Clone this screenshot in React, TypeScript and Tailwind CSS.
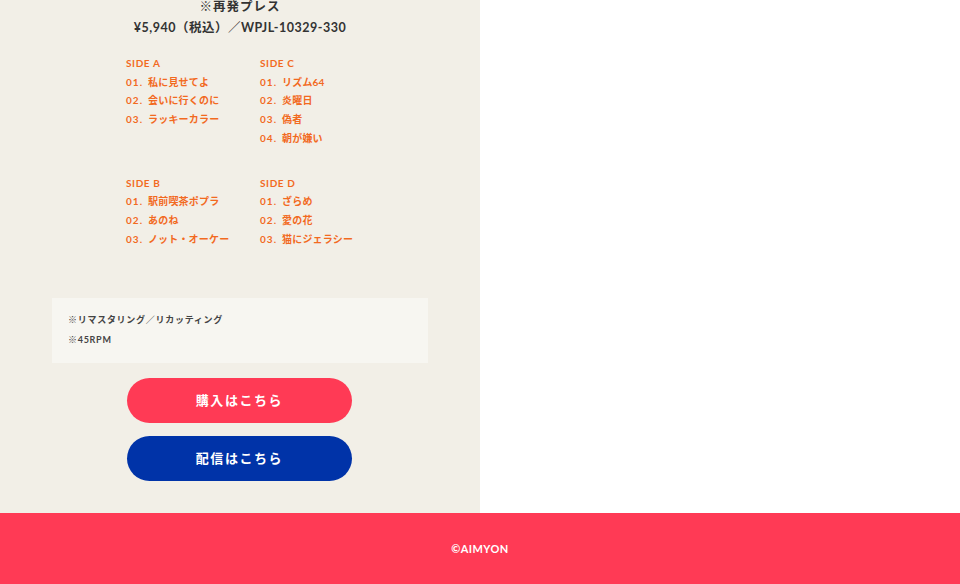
const sides = [
  [
    { label: 'SIDE A', tracks: ['私に見せてよ', '会いに行くのに', 'ラッキーカラー'] },
    { label: 'SIDE C', tracks: ['リズム64', '炎曜日', '偽者', '朝が嫌い'] },
  ],
  [
    { label: 'SIDE B', tracks: ['駅前喫茶ポプラ', 'あのね', 'ノット・オーケー'] },
    { label: 'SIDE D', tracks: ['ざらめ', '愛の花', '猫にジェラシー'] },
  ],
];

const font = { fontFamily: 'Lato, "Noto Sans CJK JP", sans-serif' };

export default function App() {
  return (
    <div className="w-[960px] bg-white" style={font}>
      <div className="w-[480px] h-[513px] bg-[#f2efe7] overflow-hidden">
        <p className="-mt-[3px] text-center text-[12.5px] leading-[20px] font-bold tracking-[0.08em] text-[#333]">
          ※再発プレス
        </p>
        <p className="text-center text-[12.5px] leading-[22px] font-bold tracking-[0.04em] text-[#333]">
          ¥5,940（税込）／WPJL-10329-330
        </p>

        <div className="mt-[15px] pl-[126px]">
          {sides.map((row, i) => (
            <div key={i} className={`flex ${i > 0 ? 'mt-[26px]' : ''}`}>
              {row.map((side) => (
                <div key={side.label} className="w-[134px] text-[10px] font-bold tracking-[0.04em] text-[#f26a1f] leading-[18.7px]">
                  <div className="tracking-[0.06em]">{side.label}</div>
                  {side.tracks.map((t, j) => (
                    <div key={t} className="whitespace-nowrap">
                      <span className="tracking-[0.1em]">0{j + 1}.</span>
                      <span className="ml-[5px] tracking-[0.02em]">{t}</span>
                    </div>
                  ))}
                </div>
              ))}
            </div>
          ))}
        </div>

        <div className="mx-[52px] mt-[50px] h-[65px] bg-[#f7f6f1] pl-[16px] pt-[12px] text-[9px] font-bold tracking-[0.08em] leading-[20px] text-[#444]">
          <p>※リマスタリング／リカッティング</p>
          <p>※45RPM</p>
        </div>

        <div className="mt-[15px] flex flex-col items-center gap-[13px] pr-[1px]">
          <button className="w-[225px] h-[45px] rounded-full bg-[#ff3a55] text-white text-[13px] font-bold tracking-[0.12em]">
            購入はこちら
          </button>
          <button className="w-[225px] h-[45px] rounded-full bg-[#0033a8] text-white text-[13px] font-bold tracking-[0.12em]">
            配信はこちら
          </button>
        </div>
      </div>

      <footer className="h-[71px] bg-[#ff3a55] flex items-center justify-center pt-[2px]">
        <span className="text-white text-[11px] font-bold tracking-[0.04em]">©AIMYON</span>
      </footer>
    </div>
  );
}
